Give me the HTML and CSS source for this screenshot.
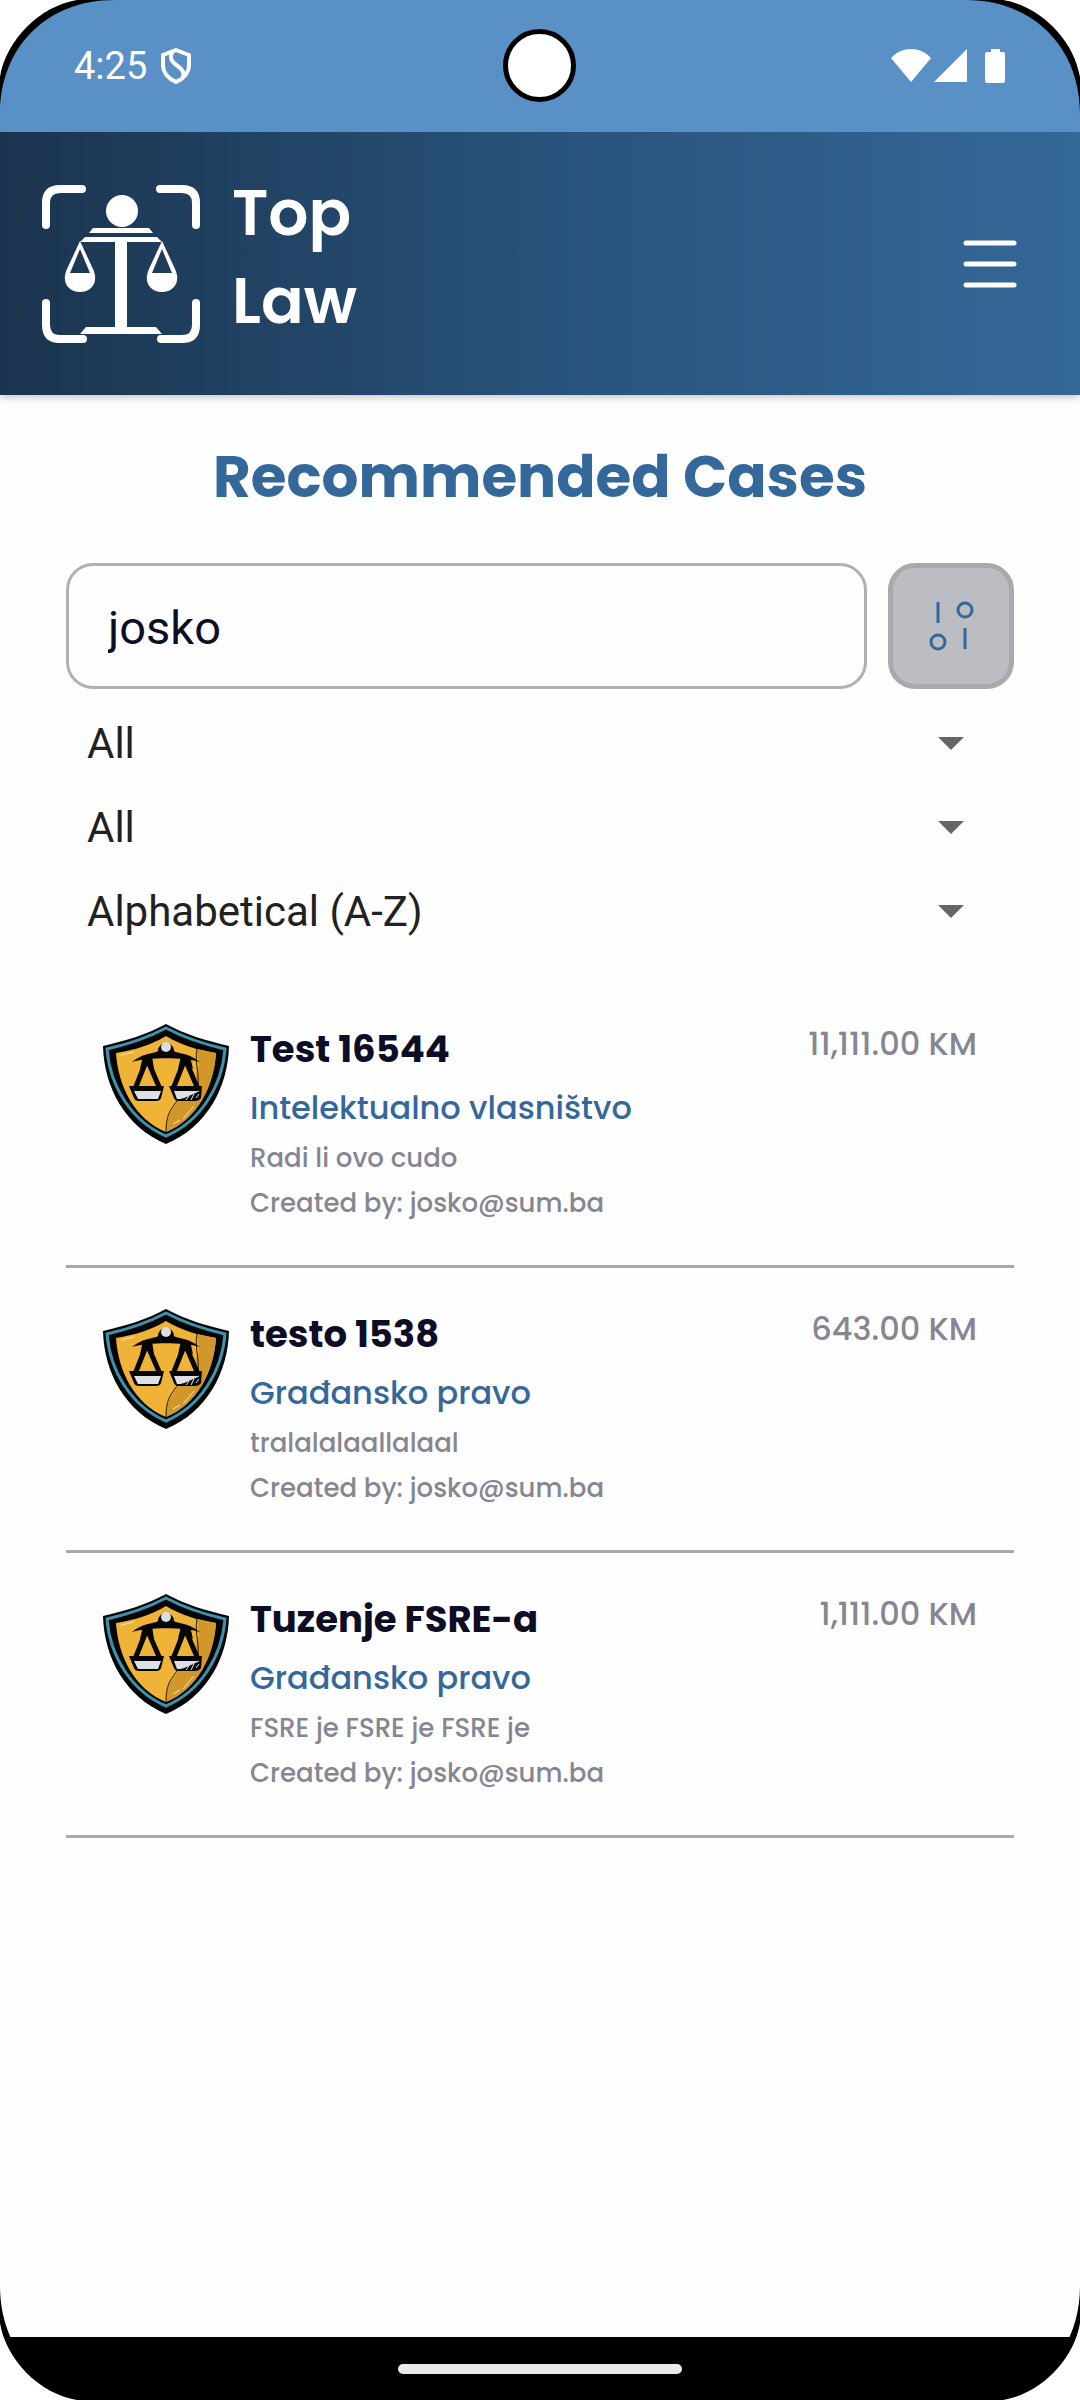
FILE: index.html
```html
<!DOCTYPE html>
<html lang="en">
<head>
<meta charset="utf-8">
<meta name="viewport" content="width=device-width, initial-scale=1">
<title>Top Law</title>
<link rel="stylesheet" href="styles.css">
</head>
<body>
<svg class="defs" aria-hidden="true">
  <symbol id="shield" viewBox="0 0 126 126">
    <path d="M63 3C45 13 22 20 0 25C1 66 22 106 63 123C104 106 125 66 126 25C104 20 81 13 63 3Z" fill="#050505"/>
    <path d="M63 7C46 16 26 23 4 28C7 65 28 100 63 115C98 100 119 65 122 28C100 23 80 16 63 7Z" fill="none" stroke="#3c93ad" stroke-width="3"/>
    <path d="M63 15C48 24 32 29 13 32C15 64 31 98 63 111C95 98 111 64 113 32C94 29 78 24 63 15Z" fill="#efb337"/>
    <path d="M94 28L113 32C111 64 95 98 63 111C63 90 72 88 75 78L93 74V52L96 45Z" fill="#d2972a"/>
    <path d="M94 28C91 43 98 55 94 70M75 78C69 88 63 91 63 111" fill="none" stroke="#241a08" stroke-width="1"/>
    <path d="M29 41C42 31 51 33 55 30A8 8 0 1 1 71 30C75 33 84 31 97 41C80 36 46 36 29 41Z" fill="#050505"/>
    <circle cx="63" cy="26" r="5" fill="#d9dde2"/>
    <path d="M44 38L32 68M44 38L57 68M82 38L70 68M82 38L95 68" fill="none" stroke="#050505" stroke-width="5"/>
    <path d="M40 35H49L51 48L44 42L37 48ZM78 35H87L90 48L82 42L75 48Z" fill="#050505"/>
    <path d="M26 65H61L58 77Q57 80 53 80H36Q32 80 31 77ZM66 65H99L98 77Q96 80 92 80H76Q72 80 71 77Z" fill="#050505"/>
    <path d="M31 70H58L55 78H35ZM71 70H95L78 78H74Z" fill="#dde0e5"/>
    <path d="M80 77L96 70M83 79L86 75M88 79L91 73M93 77L96 73" stroke="#eee" stroke-width="1"/>
    <path d="M18 34L31 31M80 98L91 85M70 103L77 99" stroke="#fbe9bd" stroke-width="1"/>
  </symbol>
  <symbol id="corner" viewBox="0 0 114 114">
    <path d="M0 0H114C47 0 0 47 0 114Z"/>
    <path d="M0 0H77C40 6 6 40 0 77Z" fill="#fff"/>
  </symbol>
</svg>
<div class="screen">
  <div class="status">
    <div class="status-left">
      <span>4:25</span>
      <svg width="30" height="36" viewBox="0 0 30 36" fill="none" stroke="#fff" stroke-width="4"><path d="M15 2L28 7V17C28 25 22 31 15 34C8 31 2 25 2 17V7Z"/><path d="M12 3C3 17 26 17 22 29"/></svg>
    </div>
    <div class="status-right">
      <svg width="115" height="36" viewBox="0 0 115 36" fill="#fff"><path d="M0 10C11-2 29-2 40 10L20 34Z"/><path d="M76 1V34H43Z"/><path d="M100 1H109V4H112Q114 4 114 6V33Q114 35 112 35H96Q94 35 94 33V6Q94 4 96 4H100Z"/></svg>
    </div>
    <span class="camera"></span>
  </div>
  <header class="header">
    <a class="brand" href="#">
      <svg width="158" height="158" viewBox="0 0 158 158" fill="#fff">
        <path d="M4 40V18Q4 4 18 4H40M118 4H140Q154 4 154 18V40M4 118V140Q4 154 18 154H41M119 154H140Q154 154 154 140V118" fill="none" stroke="#fff" stroke-width="8" stroke-linecap="round"/>
        <circle cx="80" cy="26" r="16"/>
        <path d="M51 43H107L111 48H47ZM43 52H115L120 57H85V142H114L120 149H38L44 142H73V57H38Z"/>
        <path fill-rule="evenodd" d="M38 56L51 84C57 97 50 107 38 107S19 97 25 84ZM38 64L28 88H48Z"/>
        <path fill-rule="evenodd" d="M120 56L133 84C139 97 132 107 120 107S101 97 107 84ZM120 64L110 88H130Z"/>
      </svg>
      <span class="brand-name">Top<br>Law</span>
    </a>
    <button class="menu" type="button" aria-label="Menu">
      <svg width="54" height="50" viewBox="0 0 54 50" stroke="#fff" stroke-width="5" stroke-linecap="round"><path d="M3 4H51M3 25H51M3 46H51"/></svg>
    </button>
  </header>
  <main class="content">
    <h1>Recommended Cases</h1>
    <form class="filters">
      <div class="search">
        <input type="text" aria-label="Search cases" value="josko">
        <button type="button" class="filter" aria-label="Filters">
          <svg width="46" height="50" viewBox="0 0 46 50" fill="none" stroke="#34689b" stroke-width="3"><path d="M10 1V22M37 27V48"/><circle cx="37" cy="9" r="7"/><circle cx="10" cy="41" r="7"/></svg>
        </button>
      </div>
      <select aria-label="Category"><option>All</option></select>
      <select aria-label="Status"><option>All</option></select>
      <select aria-label="Sort order"><option>Alphabetical (A-Z)</option></select>
    </form>
    <ul class="cases">
      <li class="case">
        <svg class="badge" role="img" aria-label="Shield"><use href="#shield"/></svg>
        <div class="info"><h2>Test 16544</h2><p class="kind">Intelektualno vlasništvo</p><p>Radi li ovo cudo</p><p>Created by: josko@sum.ba</p></div>
        <span class="price">11,111.00 KM</span>
      </li>
      <li class="case">
        <svg class="badge" role="img" aria-label="Shield"><use href="#shield"/></svg>
        <div class="info"><h2>testo 1538</h2><p class="kind">Građansko pravo</p><p>tralalalaallalaal</p><p>Created by: josko@sum.ba</p></div>
        <span class="price">643.00 KM</span>
      </li>
      <li class="case">
        <svg class="badge" role="img" aria-label="Shield"><use href="#shield"/></svg>
        <div class="info"><h2>Tuzenje FSRE-a</h2><p class="kind">Građansko pravo</p><p>FSRE je FSRE je FSRE je</p><p>Created by: josko@sum.ba</p></div>
        <span class="price">1,111.00 KM</span>
      </li>
    </ul>
  </main>
  <div class="nav"><span class="pill"></span></div>
  <svg class="corner tl"><use href="#corner"/></svg>
  <svg class="corner tr"><use href="#corner"/></svg>
  <svg class="corner bl"><use href="#corner"/></svg>
  <svg class="corner br"><use href="#corner"/></svg>
</div>
</body>
</html>
```
FILE: styles.css
```css
* { box-sizing: border-box; }
body { margin: 0; background: #fff; font-family: Poppins, Inter, sans-serif; color: #0d0d26; }
h1, h2, p, ul { margin: 0; padding: 0; }
button { padding: 0; background: none; border: 0; }
svg { display: block; }
.defs { position: absolute; width: 0; height: 0; }
.screen { position: relative; display: flex; flex-direction: column; min-height: 100vh; background: #fefefe; }

.status { position: relative; display: flex; justify-content: space-between; align-items: center; height: 132px; padding: 0 74px; background: #5990c6; }
.status-left { display: flex; align-items: center; gap: 14px; color: #fff; font: 38px/40px Roboto, sans-serif; }
.camera { position: absolute; top: 29px; left: 50%; width: 73px; height: 73px; margin-left: -37px; border: 5px solid #000; border-radius: 50%; background: #fff; }

.header { display: flex; justify-content: space-between; align-items: center; height: 263px; padding: 0 63px 0 42px; background: linear-gradient(90deg, #1b344e, #28527a 50%, #346899); box-shadow: 0 2px 8px rgba(0, 0, 0, 0.25); }
.brand { display: flex; align-items: center; gap: 32px; color: #fff; text-decoration: none; }
.brand-name { font-size: 63px; line-height: 88px; font-weight: 600; padding-bottom: 14px; }

.content { flex: 1; padding: 34px 66px; }
h1 { text-align: center; font-size: 58px; line-height: 96px; font-weight: 700; color: #34689b; }
.filters { display: flex; flex-direction: column; margin-top: 38px; }
.search { display: flex; gap: 21px; margin-bottom: 12px; }
.search input { flex: 1; min-width: 0; height: 126px; padding: 2px 39px 0; border: 3px solid #afb0b6; border-radius: 27px; background: #fefefe; color: #0d0d26; font: 47px Roboto, sans-serif; }
.filter { display: flex; align-items: center; justify-content: center; width: 126px; height: 126px; border: 5px solid #a9a9a9; border-radius: 27px; background: #bcbdc2; }
select { height: 84px; padding: 0 21px; border: 0; appearance: none; color: #212121; font: 42px Roboto, sans-serif; background: url("data:image/svg+xml,%3Csvg xmlns='http://www.w3.org/2000/svg' width='26' height='13'%3E%3Cpath d='M0 0H26L13 13Z' fill='%23666'/%3E%3C/svg%3E") no-repeat right 50px center; }

.cases { margin-top: 30px; list-style: none; }
.case { display: flex; align-items: flex-start; height: 285px; padding: 38px 37px 0; border-bottom: 3px solid #a9a9a9; }
.badge { width: 126px; height: 126px; flex: none; }
.info { flex: 1; padding-left: 21px; }
.info h2 { font-size: 37px; line-height: 56px; font-weight: 700; margin-bottom: 5px; }
.info p { font-size: 26px; line-height: 45px; font-weight: 500; color: #868692; }
.info .kind { font-size: 32px; line-height: 52px; margin-bottom: 2px; color: #34689b; }
.price { font-size: 32px; line-height: 46px; font-weight: 500; color: #868692; }

.nav { display: flex; justify-content: center; align-items: center; height: 63px; background: #000; }
.pill { width: 284px; height: 10px; border-radius: 5px; background: #eaeaea; }
.corner { position: absolute; width: 114px; height: 114px; }
.tl { top: 0; left: 0; }
.tr { top: 0; right: 0; transform: scaleX(-1); }
.bl { bottom: 0; left: 0; transform: scaleY(-1); }
.br { bottom: 0; right: 0; transform: scale(-1); }
```
